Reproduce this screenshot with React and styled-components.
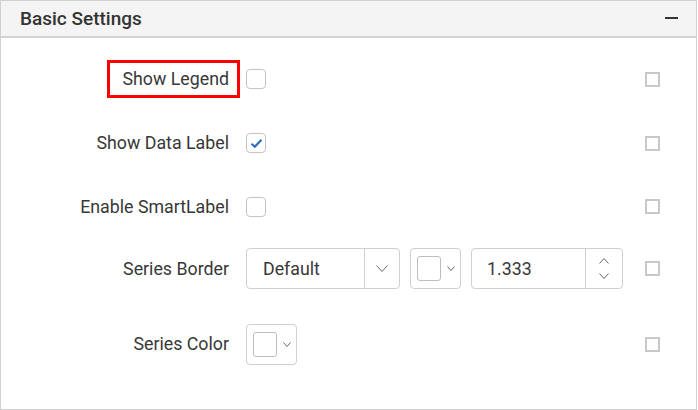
import React from 'react';
import styled, { createGlobalStyle } from 'styled-components';

const GlobalStyle = createGlobalStyle`
  html, body {
    margin: 0;
    padding: 0;
    background: #fff;
    font-family: Roboto, "Liberation Sans", sans-serif;
    color: #333;
  }
`;

const Panel = styled.div`
  width: 697px;
  height: 410px;
  box-sizing: border-box;
  border: 1px solid #cfcfcf;
  background: #fff;
`;

const Header = styled.div`
  height: 37px;
  box-sizing: border-box;
  display: flex;
  align-items: center;
  justify-content: space-between;
  padding: 0 18px 0 19px;
  background: #f4f4f4;
  border-bottom: 2px solid #d2d2d2;
`;

const Title = styled.span`
  font-size: 19px;
  font-weight: 500;
  color: #333;
`;

const Minus = styled.span`
  width: 13px;
  height: 2px;
  background: #333;
  margin-bottom: 1px;
`;

const Body = styled.div`
  padding-top: 9px;
`;

const Row = styled.div`
  height: ${p => p.h}px;
  display: grid;
  grid-template-columns: 228px 1fr 15px;
  column-gap: 17px;
  align-items: center;
  padding-right: 36px;
  box-sizing: border-box;
`;

const Label = styled.label`
  position: relative;
  justify-self: end;
  font-size: 17.8px;
  color: #383838;
  line-height: 20px;

  ${p => p.highlight && `
    &::after {
      content: '';
      position: absolute;
      left: -15px;
      right: -11px;
      top: -9px;
      bottom: -9px;
      border: 3px solid #f00;
    }
  `}
`;

const Controls = styled.div`
  display: flex;
  align-items: center;
  gap: 10px;
`;

const CheckBox = styled.span`
  width: 20px;
  height: 20px;
  box-sizing: border-box;
  border: 1.5px solid #c4c4c4;
  border-radius: 4px;
  display: flex;
  align-items: center;
  justify-content: center;
`;

const SideBox = styled.span`
  width: 15px;
  height: 15px;
  box-sizing: border-box;
  border: 2px solid #c8c8c8;
`;

const Field = styled.div`
  height: 41px;
  width: ${p => p.w}px;
  box-sizing: border-box;
  border: 1px solid #cfcfcf;
  border-radius: 4px;
  display: flex;
  align-items: stretch;
  background: #fff;
`;

const FieldText = styled.span`
  flex: 1;
  display: flex;
  align-items: center;
  padding-left: ${p => p.pl}px;
  font-size: 17.8px;
  color: #383838;
`;

const FieldButton = styled.span`
  width: ${p => p.w}px;
  border-left: 1px solid #cfcfcf;
  display: flex;
  flex-direction: column;
  align-items: center;
  justify-content: center;
  gap: ${p => p.gap || 0}px;
  color: #555;
`;

const Swatch = styled.span`
  width: 24px;
  height: 25px;
  box-sizing: border-box;
  border: 1.5px solid #bdbdbd;
  border-radius: 3px;
  margin-left: 6px;
  align-self: center;
`;

const SmallChevron = styled.span`
  display: flex;
  align-items: center;
  padding-left: 6px;
  color: #555;
`;

const Chevron = ({ w, h, up }) => (
  <svg width={w} height={h} viewBox={`0 0 ${w} ${h}`} fill="none">
    <path
      d={up ? `M0.5 ${h - 0.5} L${w / 2} 0.5 L${w - 0.5} ${h - 0.5}` : `M0.5 0.5 L${w / 2} ${h - 0.5} L${w - 0.5} 0.5`}
      stroke="#666"
      strokeWidth="1"
    />
  </svg>
);

const Check = () => (
  <svg width="13" height="11" viewBox="0 0 13 11" fill="none">
    <path d="M1.5 5.8 L4.8 8.8 L11.5 1.8" stroke="#2a6ebd" strokeWidth="2.2" />
  </svg>
);

const ColorPicker = () => (
  <Field w={51}>
    <Swatch />
    <SmallChevron>
      <Chevron w={8} h={5} />
    </SmallChevron>
  </Field>
);

const App = () => (
  <>
    <GlobalStyle />
    <Panel>
      <Header>
        <Title>Basic Settings</Title>
        <Minus />
      </Header>
      <Body>
        <Row h={64}>
          <Label highlight>Show Legend</Label>
          <Controls>
            <CheckBox />
          </Controls>
          <SideBox />
        </Row>
        <Row h={64}>
          <Label>Show Data Label</Label>
          <Controls>
            <CheckBox>
              <Check />
            </CheckBox>
          </Controls>
          <SideBox />
        </Row>
        <Row h={63}>
          <Label>Enable SmartLabel</Label>
          <Controls>
            <CheckBox />
          </Controls>
          <SideBox />
        </Row>
        <Row h={61}>
          <Label>Series Border</Label>
          <Controls>
            <Field w={154}>
              <FieldText pl={16}>Default</FieldText>
              <FieldButton w={34}>
                <Chevron w={12} h={7} />
              </FieldButton>
            </Field>
            <ColorPicker />
            <Field w={152}>
              <FieldText pl={15}>1.333</FieldText>
              <FieldButton w={36} gap={9}>
                <Chevron w={10} h={6} up />
                <Chevron w={10} h={6} />
              </FieldButton>
            </Field>
          </Controls>
          <SideBox />
        </Row>
        <Row h={90}>
          <Label>Series Color</Label>
          <Controls>
            <ColorPicker />
          </Controls>
          <SideBox />
        </Row>
      </Body>
    </Panel>
  </>
);

export default App;
